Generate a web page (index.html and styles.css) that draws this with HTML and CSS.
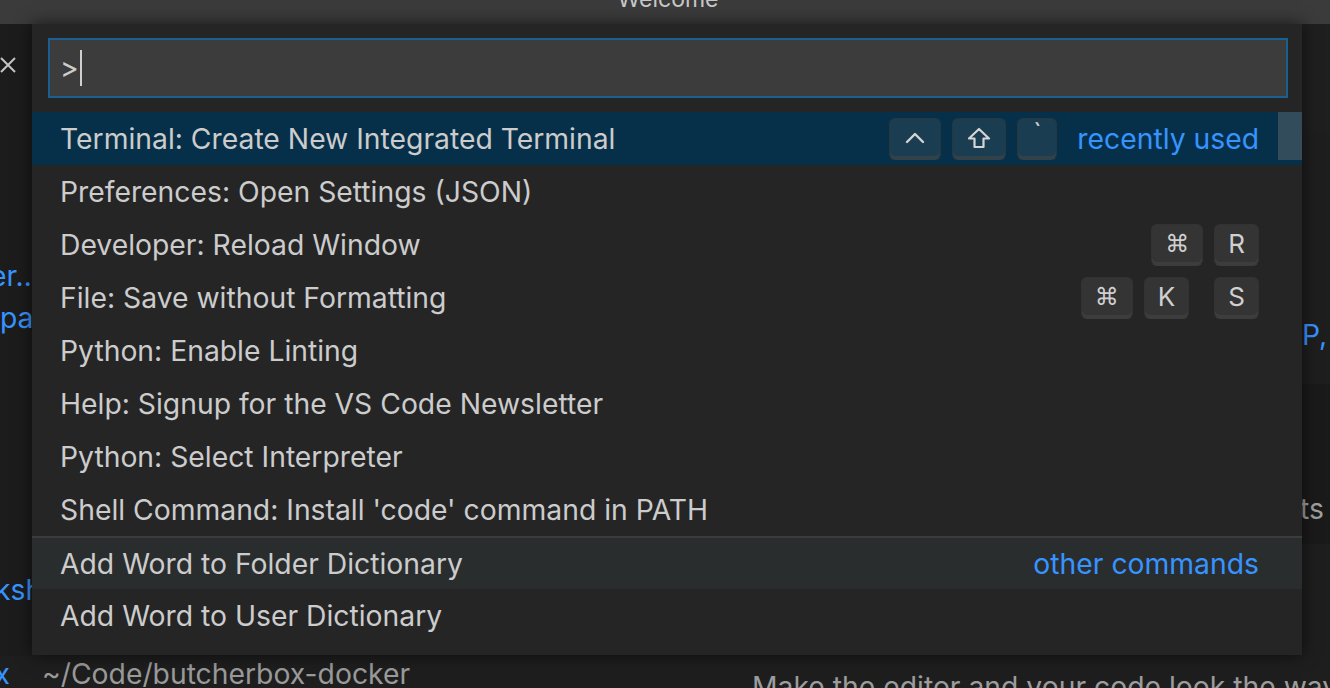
FILE: index.html
```html
<!DOCTYPE html>
<html>
<head>
<meta charset="utf-8">
<link rel="stylesheet" href="styles.css">
</head>
<body>
<div class="titlebar"><span class="title">Welcome</span></div>
<div class="editor">
  <div class="col-left">
    <div class="close-x">
      <svg width="18" height="18" viewBox="0 0 18 18"><path d="M2 2 L16 16 M16 2 L2 16" stroke="#c5c5c5" stroke-width="2" fill="none"/></svg>
    </div>
    <div class="bg-link l-er">er…</div>
    <div class="bg-link l-pa">paths and keybindings</div>
    <div class="bg-link l-ksh">kshop walkthrough</div>
  </div>
  <div class="col-mid"></div>
  <div class="col-right">
    <div class="bg-band b1"></div>
    <div class="bg-band b2"><span class="bg-link">P, Azure</span></div>
    <div class="bg-band b3"><span class="bg-gray">ts of</span></div>
    <div class="bg-band b4"></div>
  </div>
  <div class="bottom-line">
    <span class="recent"><span class="name bg-link">butcherbox</span><span class="path">~/Code/butcherbox-docker</span></span>
    <span class="bg-gray make">Make the editor and your code look the way you love</span>
  </div>
</div>

<div class="palette">
  <div class="input">
    <span class="prompt">&gt;</span><span class="caret"></span>
  </div>
  <div class="list">
    <div class="row selected">
      <span class="label">Terminal: Create New Integrated Terminal</span>
      <span class="keys">
        <span class="key icon">
          <svg width="22" height="14" viewBox="0 0 22 14"><path d="M3 11 L11 3 L19 11" stroke="#d4d4d4" stroke-width="2.4" fill="none" stroke-linecap="round" stroke-linejoin="round"/></svg>
        </span>
        <span class="key icon">
          <svg width="24" height="22" viewBox="0 0 24 22"><path d="M12 2 L22 11.5 L16.5 11.5 L16.5 20 L7.5 20 L7.5 11.5 L2 11.5 Z" stroke="#d4d4d4" stroke-width="2.2" fill="none" stroke-linejoin="round"/></svg>
        </span>
        <span class="key tick">`</span>
      </span>
      <span class="desc">recently used</span>
      <span class="thumb"></span>
    </div>
    <div class="row"><span class="label">Preferences: Open Settings (JSON)</span></div>
    <div class="row">
      <span class="label">Developer: Reload Window</span>
      <span class="keys"><span class="key cmd">⌘</span><span class="key">R</span></span>
    </div>
    <div class="row">
      <span class="label">File: Save without Formatting</span>
      <span class="keys"><span class="key cmd">⌘</span><span class="key">K</span><span class="chord"></span><span class="key">S</span></span>
    </div>
    <div class="row"><span class="label">Python: Enable Linting</span></div>
    <div class="row"><span class="label">Help: Signup for the VS Code Newsletter</span></div>
    <div class="row"><span class="label">Python: Select Interpreter</span></div>
    <div class="row"><span class="label">Shell Command: Install 'code' command in PATH</span></div>
    <div class="row separator hover">
      <span class="label">Add Word to Folder Dictionary</span>
      <span class="desc">other commands</span>
    </div>
    <div class="row"><span class="label">Add Word to User Dictionary</span></div>
  </div>
</div>
</body>
</html>
```
FILE: styles.css
```css
* { box-sizing: border-box; }
html, body {
  margin: 0;
  padding: 0;
  width: 1330px;
  height: 688px;
  overflow: hidden;
  background: #1e1e1e;
  font-family: Inter, "Liberation Sans", sans-serif;
  color: #cccccc;
}
body { position: relative; }

.titlebar {
  height: 24px;
  background: #3b3b3b;
  display: flex;
  justify-content: center;
  overflow: hidden;
}
.title {
  font-size: 23px;
  line-height: 24px;
  color: #c8c8c8;
  margin-top: -13px;
  margin-left: 6px;
}

.editor {
  height: 664px;
  display: grid;
  grid-template-columns: 32px 1fr 28px;
  grid-template-rows: 632px 32px;
  overflow: hidden;
  background: #1e1e1e;
}
.col-left {
  background: #1c1c1c;
  display: flex;
  flex-direction: column;
  align-items: flex-start;
  overflow: hidden;
  font-size: 28.3px;
}
.close-x { margin-top: 32px; margin-left: -1px; height: 18px; }
.close-x svg { display: block; }
.bg-link { color: #3794ff; white-space: nowrap; }
.bg-gray { color: #a0a0a0; white-space: nowrap; }
.col-left .bg-link { line-height: 32px; }
.l-er { margin-top: 186px; margin-left: -10px; }
.l-pa { margin-top: 10px; margin-left: 0; }
.l-ksh { margin-top: 240px; margin-left: -5px; }

.col-right {
  display: flex;
  flex-direction: column;
  font-size: 28.3px;
  overflow: hidden;
}
.bg-band { white-space: nowrap; }
.b1 { height: 110px; background: #1f1f1f; }
.b2 { height: 250px; background: #1e1e1e; padding-top: 186px; line-height: 30px; }
.b3 { height: 160px; background: #1a1a1a; padding-top: 110px; line-height: 30px; margin-left: -2px; }
.b4 { flex: 1; background: #1e1e1e; }

.bottom-line {
  grid-column: 1 / 4;
  display: flex;
  font-size: 28.3px;
  line-height: 32px;
  white-space: nowrap;
  padding-top: 2px;
}
.recent { width: 752px; display: flex; flex-shrink: 0; }
.name { width: 10px; display: flex; justify-content: flex-end; }
.path { color: #9a9a9a; margin-left: 32px; }
.make { color: #9c9c9c; padding-top: 13px; }

/* palette overlay */
.palette {
  position: absolute;
  left: 32px;
  top: 24px;
  width: 1270px;
  height: 631px;
  background: #252526;
  box-shadow: 0 0 16px rgba(0, 0, 0, 0.6);
  padding: 14px 14px 0 16px;
  display: flex;
  flex-direction: column;
}
.input {
  height: 60px;
  background: #3c3c3c;
  border: 2px solid #1b5e91;
  display: flex;
  align-items: center;
  padding-left: 10px;
  font-size: 28.3px;
  color: #cccccc;
}
.prompt { line-height: 30px; }
.caret {
  width: 2px;
  height: 36px;
  background: #d0d0d0;
  margin-left: 1px;
}
.list {
  margin: 14px -14px 0 -16px;
  display: flex;
  flex-direction: column;
}
.row {
  height: 53px;
  display: flex;
  align-items: center;
  padding: 0 43px 0 28px;
  font-size: 28.3px;
  color: #cccccc;
  position: relative;
  white-space: nowrap;
}
.row.selected { background: #063049; }
.row.separator { border-top: 2px solid #3c3c3f; }
.row.hover { background: #2a2d2e; }
.label { flex: 1; }
.desc { color: #3794ff; margin-left: 20px; }
.keys { display: flex; align-items: center; gap: 11px; }
.chord { width: 3px; }
.key {
  height: 42px;
  min-width: 40px;
  padding: 0 13px 2px;
  display: flex;
  align-items: center;
  justify-content: center;
  background: rgba(128, 128, 128, 0.17);
  border: 1px solid rgba(51, 51, 51, 0.6);
  border-bottom-color: rgba(68, 68, 68, 0.6);
  box-shadow: inset 0 -3px 0 rgba(68, 68, 68, 0.6);
  border-radius: 6px;
  font-size: 26px;
  color: #d0d0d0;
}
.key.icon { padding: 0 14px 2px; }
.key.cmd { font-family: "DejaVu Sans", sans-serif; font-size: 24px; padding: 0 13px 2px; }
.key.tick { padding-bottom: 12px; }
.thumb {
  position: absolute;
  right: 0;
  top: 0;
  width: 24px;
  height: 48px;
  background: rgba(121, 121, 121, 0.4);
}
```
